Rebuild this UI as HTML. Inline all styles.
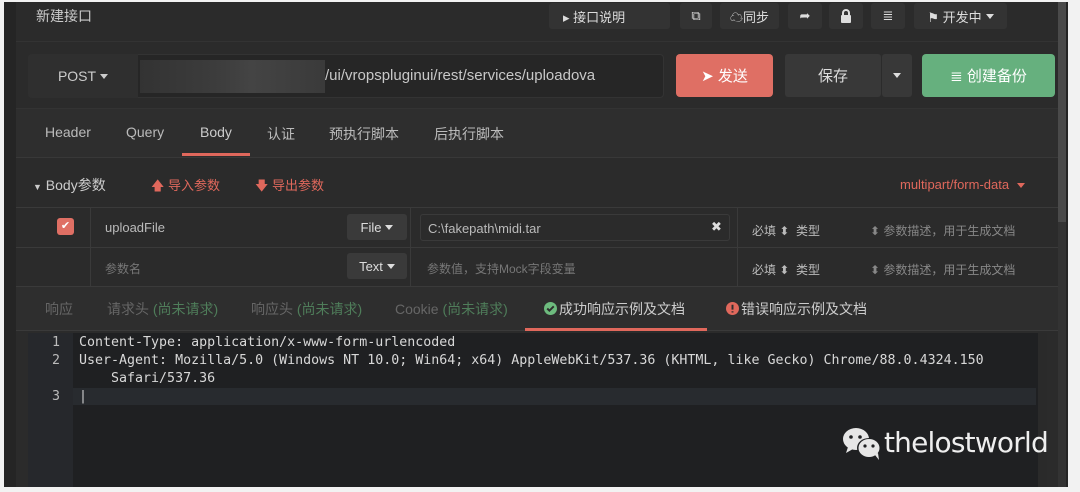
<!DOCTYPE html>
<html><head><meta charset="utf-8"><style>
*{margin:0;padding:0;box-sizing:border-box}
body{width:1080px;height:492px;background:#f2f2f2;position:relative;overflow:hidden;font-family:"Liberation Sans","Noto Sans CJK SC",sans-serif;font-size:14px;color:#bbb}
.a{position:absolute}
.btn{position:absolute;background:#333;border-radius:3px;color:#ddd;display:flex;align-items:center;justify-content:center;font-size:13px}
.mono{font-family:"DejaVu Sans Mono","Liberation Mono",monospace;font-size:13.3px;color:#d8d8d8}
.red{color:#e0685c}
.grn{color:#4f7d5a}
.tri{display:inline-block;width:0;height:0;border-left:4px solid transparent;border-right:4px solid transparent;border-top:5px solid currentColor;vertical-align:middle;margin-left:4px}
</style></head><body>
<div class="a" style="left:4px;top:2px;width:1064px;height:485px;background:#252525"></div>
<div class="a" style="left:16px;top:2px;width:1042px;height:485px;background:#2b2b2b"></div>
<!-- header -->
<div class="a" style="left:36px;top:6px;font-size:14px;color:#ccc">新建接口</div>
<div class="btn" style="left:549px;top:3px;width:121px;height:26px;justify-content:flex-start;padding-left:14px">▸ 接口说明</div>
<div class="btn" style="left:680px;top:3px;width:32px;height:26px">⧉</div>
<div class="btn" style="left:720px;top:3px;width:59px;height:26px">☁同步</div>
<div class="btn" style="left:788px;top:3px;width:34px;height:26px">➦</div>
<div class="btn" style="left:829px;top:3px;width:34px;height:26px"><svg width="12" height="14" viewBox="0 0 12 14"><path d="M3 6V4a3 3 0 0 1 6 0v2" stroke="#ddd" stroke-width="2" fill="none"/><rect x="1" y="6" width="10" height="8" rx="1" fill="#ddd"/></svg></div>
<div class="btn" style="left:871px;top:3px;width:34px;height:26px">≣</div>
<div class="btn" style="left:914px;top:3px;width:93px;height:26px">⚑ 开发中 <span class="tri"></span></div>
<div class="a" style="left:16px;top:41px;width:1042px;height:1px;background:#333"></div>
<!-- url row -->
<div class="a" style="left:28px;top:54px;width:636px;height:44px;border:1px solid #333;border-radius:4px;background:#262626"></div>
<div class="a" style="left:28px;top:54px;width:110px;height:44px;background:#2f2f2f;border-radius:4px 0 0 4px;color:#ccc;display:flex;align-items:center;justify-content:center">POST<span class="tri" style="border-top-color:#ccc"></span></div>
<div class="a" style="left:140px;top:60px;width:185px;height:33px;background:linear-gradient(90deg,#333,#3c3c3c 40%,#444 60%,#3a3a3a)"></div>
<div class="a" style="left:325px;top:67px;font-size:15px;color:#c8c8c8">/ui/vropspluginui/rest/services/uploadova</div>
<div class="btn" style="left:676px;top:54px;width:97px;height:43px;background:#df6f64;color:#fff;font-size:15px;border-radius:4px">➤ 发送</div>
<div class="btn" style="left:785px;top:54px;width:96px;height:43px;background:#383838;font-size:15px">保存</div>
<div class="btn" style="left:882px;top:54px;width:30px;height:43px;background:#383838"><span class="tri" style="margin:0"></span></div>
<div class="btn" style="left:922px;top:54px;width:133px;height:43px;background:#66b07e;color:#fff;font-size:15px;border-radius:4px">≣ 创建备份</div>
<div class="a" style="left:16px;top:108px;width:1042px;height:1px;background:#333"></div>
<!-- tabs -->
<div class="a" style="left:16px;top:109px;width:1042px;height:48px;background:#2e2e2e"></div>
<div class="a" style="left:45px;top:124px;color:#bbb">Header</div>
<div class="a" style="left:126px;top:124px;color:#bbb">Query</div>
<div class="a" style="left:200px;top:124px;color:#ccc">Body</div>
<div class="a" style="left:182px;top:153px;width:68px;height:3px;background:#e0685c"></div>
<div class="a" style="left:267px;top:124px;color:#bbb">认证</div>
<div class="a" style="left:329px;top:124px;color:#bbb">预执行脚本</div>
<div class="a" style="left:434px;top:124px;color:#bbb">后执行脚本</div>
<div class="a" style="left:16px;top:157px;width:1042px;height:1px;background:#383838"></div>
<!-- body params -->
<div class="a" style="left:33px;top:175px;color:#ccc"><span style="font-size:9px">▼</span> Body参数</div>
<div class="a red" style="left:151px;top:175px;font-size:13px">🡅 导入参数</div>
<div class="a red" style="left:255px;top:175px;font-size:13px">🡇 导出参数</div>
<div class="a red" style="left:900px;top:177px;font-size:13px">multipart/form-data <span class="tri"></span></div>
<!-- table -->
<div class="a" style="left:16px;top:207px;width:1042px;height:80px;border-top:1px solid #3a3a3a;border-bottom:1px solid #3a3a3a"></div>
<div class="a" style="left:16px;top:247px;width:1042px;height:1px;background:#3a3a3a"></div>
<div class="a" style="left:90px;top:207px;width:1px;height:80px;background:#3a3a3a"></div>
<div class="a" style="left:410px;top:207px;width:1px;height:80px;background:#3a3a3a"></div>
<div class="a" style="left:737px;top:207px;width:1px;height:80px;background:#3a3a3a"></div>
<div class="a" style="left:57px;top:218px;width:17px;height:17px;background:#df6f64;border-radius:3px;color:#fff;font-size:11px;text-align:center;line-height:17px">✔</div>
<div class="a" style="left:105px;top:220px;color:#bbb;font-size:13px">uploadFile</div>
<div class="btn" style="left:347px;top:214px;width:60px;height:26px;background:#3a3a3a">File<span class="tri"></span></div>
<div class="a" style="left:420px;top:214px;width:310px;height:27px;border:1px solid #3a3a3a;border-radius:3px"></div>
<div class="a" style="left:428px;top:221px;color:#bbb;font-size:13px">C:\fakepath\midi.tar</div>
<div class="a" style="left:711px;top:219px;color:#ddd;font-size:13px">✖</div>
<div class="a" style="left:752px;top:222px;font-size:12px;color:#bbb">必填 ⬍ &nbsp;类型</div>
<div class="a" style="left:870px;top:222px;font-size:12px;color:#888">⬍ 参数描述，用于生成文档</div>
<div class="a" style="left:105px;top:260px;color:#777;font-size:12px">参数名</div>
<div class="btn" style="left:347px;top:253px;width:60px;height:26px;background:#3a3a3a">Text<span class="tri"></span></div>
<div class="a" style="left:427px;top:260px;color:#777;font-size:12px">参数值，支持Mock字段变量</div>
<div class="a" style="left:752px;top:261px;font-size:12px;color:#bbb">必填 ⬍ &nbsp;类型</div>
<div class="a" style="left:870px;top:261px;font-size:12px;color:#888">⬍ 参数描述，用于生成文档</div>
<!-- response tabs -->
<div class="a" style="left:16px;top:287px;width:1042px;height:44px;background:#2e2e2e;border-bottom:1px solid #3a3a3a"></div>
<div class="a" style="left:45px;top:299px;color:#666">响应</div>
<div class="a" style="left:107px;top:299px;color:#666">请求头 <span class="grn">(尚未请求)</span></div>
<div class="a" style="left:251px;top:299px;color:#666">响应头 <span class="grn">(尚未请求)</span></div>
<div class="a" style="left:395px;top:299px;color:#666">Cookie <span class="grn">(尚未请求)</span></div>
<div class="a" style="left:544px;top:299px;color:#ccc"><svg width="13" height="13" viewBox="0 0 12 12" style="vertical-align:-1px;margin-right:2px"><circle cx="6" cy="6" r="6" fill="#6dbb7e"/><path d="M3 6l2 2 4-4" stroke="#2e2e2e" stroke-width="1.8" fill="none"/></svg>成功响应示例及文档</div>
<div class="a" style="left:525px;top:328px;width:182px;height:3px;background:#e0685c"></div>
<div class="a" style="left:726px;top:299px;color:#ccc"><svg width="13" height="13" viewBox="0 0 12 12" style="vertical-align:-1px;margin-right:2px"><circle cx="6" cy="6" r="6" fill="#e0685c"/><path d="M6 2.5v4.5M6 8.5v1.2" stroke="#2e2e2e" stroke-width="1.8"/></svg>错误响应示例及文档</div>
<!-- editor -->
<div class="a" style="left:28px;top:333px;width:1010px;height:154px;background:#1f2022"></div>
<div class="a" style="left:28px;top:333px;width:45px;height:154px;background:#26282c"></div>
<div class="a" style="left:73px;top:388px;width:963px;height:17px;background:#282b2f"></div>
<div class="a" style="left:1038px;top:333px;width:9px;height:154px;background:#2a2a2a"></div>
<div class="a mono" style="left:52px;top:334px;line-height:18px;color:#bbb">1<br>2<br><br>3</div>
<div class="a mono" style="left:79px;top:334px;line-height:18px;white-space:pre">Content-Type: application/x-www-form-urlencoded
User-Agent: Mozilla/5.0 (Windows NT 10.0; Win64; x64) AppleWebKit/537.36 (KHTML, like Gecko) Chrome/88.0.4324.150
    Safari/537.36
<span style="color:#ccc">|</span></div>
<svg class="a" style="left:842px;top:427px" width="42" height="34" viewBox="0 0 42 34"><ellipse cx="14" cy="12" rx="13" ry="11" fill="#e6e6e6"/><path d="M6 20l-2 6 7-4z" fill="#e6e6e6"/><circle cx="9" cy="10" r="1.8" fill="#1f2022"/><circle cx="18" cy="10" r="1.8" fill="#1f2022"/><ellipse cx="27" cy="21" rx="12" ry="10" fill="#1f2022"/><ellipse cx="27" cy="21" rx="10.5" ry="9" fill="#e6e6e6"/><path d="M33 28l4 5-1-7z" fill="#e6e6e6"/><circle cx="23" cy="19" r="1.6" fill="#1f2022"/><circle cx="31" cy="19" r="1.6" fill="#1f2022"/></svg>
<div class="a" style="left:884px;top:426px;color:#eee;font-size:28px;font-family:'DejaVu Sans',sans-serif;letter-spacing:-0.8px">thelostworld</div>
<!-- scrollbar -->
<div class="a" style="left:1058px;top:2px;width:8px;height:485px;background:#333"></div>
<div class="a" style="left:1058px;top:2px;width:8px;height:220px;background:#4a4a4a"></div>
</body></html>
